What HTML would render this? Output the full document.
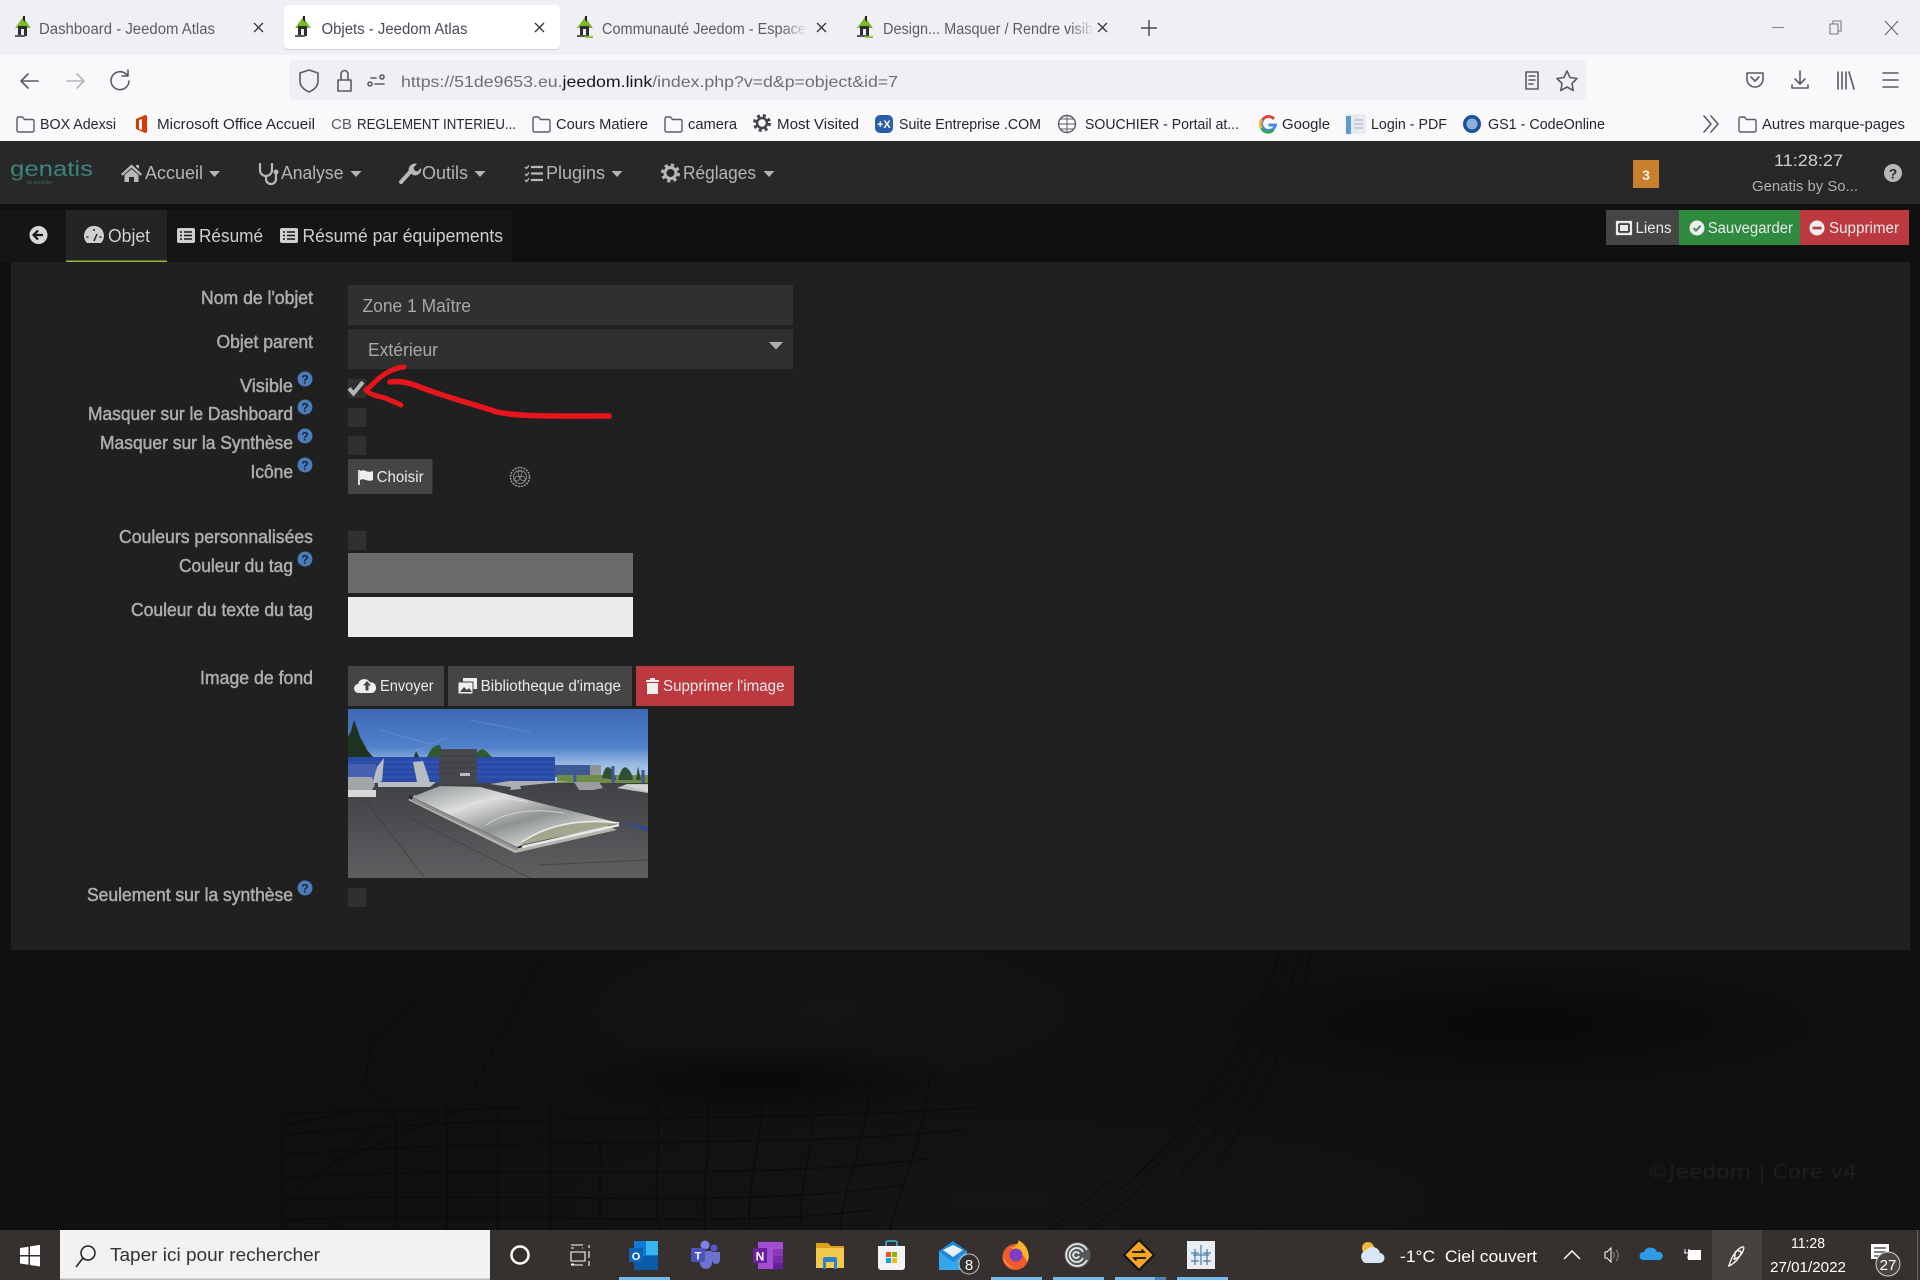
<!DOCTYPE html>
<html lang="fr"><head><meta charset="utf-8"><title>Objets - Jeedom Atlas</title>
<style>
html,body{margin:0;padding:0;width:1920px;height:1280px;overflow:hidden;background:#101010}
svg{display:block}
text{font-family:"Liberation Sans",sans-serif;white-space:pre}
.tab{font-size:15.500px;fill:#5b5b66;transform:translateY(1px)}.tab2{font-size:15.500px;fill:#4a4a55;transform:translateY(1px)}
.bm{font-size:15px;fill:#26262c}
.nav{font-size:18.500px;fill:#b4b4b4}
.tb{font-size:18.500px;fill:#cfcfcf}
.btn{font-size:15.500px;fill:#eaeaea}
.lab{font-size:18.500px;fill:#adadad;stroke:#adadad;stroke-width:.5;transform:translateY(1px)}
.inp{font-size:18.500px;fill:#a8a8a8;transform:translateY(1px)}
.help{font-size:12px;font-weight:bold;fill:#17243a;text-anchor:middle}
.tk{fill:#fff;font-size:17px}
.ico{fill:none;stroke:#5b5b66;stroke-width:1.6;stroke-linecap:round;stroke-linejoin:round}
.wi{fill:none;stroke:#fff;stroke-width:1.5}
</style></head><body>
<svg width="1920" height="1280" viewBox="0 0 1920 1280" xmlns="http://www.w3.org/2000/svg">
<defs>
<linearGradient id="sky" x1="0" y1="0" x2="0" y2="1"><stop offset="0" stop-color="#3d69b4"/><stop offset=".5" stop-color="#5080ca"/><stop offset=".75" stop-color="#9cbde4"/><stop offset="1" stop-color="#b4cdea"/></linearGradient>
<linearGradient id="dome" x1="0" y1="0" x2="1" y2="1"><stop offset="0" stop-color="#8c9092"/><stop offset=".3" stop-color="#dcdedd"/><stop offset=".55" stop-color="#8f9391"/><stop offset=".75" stop-color="#ccd0cc"/><stop offset="1" stop-color="#8c8f89"/></linearGradient>
<linearGradient id="roof" x1="0" y1="0" x2="0" y2="1"><stop offset="0" stop-color="#3f4144"/><stop offset="1" stop-color="#5e5f61"/></linearGradient>
<linearGradient id="logo" x1="0" y1="0" x2="0" y2="1"><stop offset="0" stop-color="#4a9fb5"/><stop offset="1" stop-color="#358a66"/></linearGradient>
<radialGradient id="lt"><stop offset="0" stop-color="#151515"/><stop offset="1" stop-color="#151515" stop-opacity="0"/></radialGradient>
<radialGradient id="dk"><stop offset="0" stop-color="#090909"/><stop offset="1" stop-color="#090909" stop-opacity="0"/></radialGradient>
<linearGradient id="fade1" x1="0" y1="0" x2="1" y2="0"><stop offset="0" stop-color="#f0f0f4" stop-opacity="0"/><stop offset="1" stop-color="#f0f0f4"/></linearGradient>
<g id="fav"><path d="M-1 8L7-3l8 11z" fill="#7db928"/><path d="M7-4l2 0v6l-2-2z" fill="#222"/><rect x="2" y="6" width="9" height="10" fill="#2e2e2e"/><rect x="5" y="9" width="3" height="7" fill="#eee"/><rect x="-1" y="15" width="10" height="2" fill="#5a5a5a"/></g>
<path id="folder" d="M1 3.500a1.500 1.500 0 0 1 1.500-1.500h4l2 2.500h8a1.500 1.500 0 0 1 1.500 1.500v9.500a1.500 1.500 0 0 1-1.500 1.500h-14a1.500 1.500 0 0 1-1.500-1.500z" fill="none" stroke="#5b5b66" stroke-width="1.400"/>
<g id="lst"><rect x="0" y="0" width="18" height="15" rx="2" fill="#cfcfcf"/><path d="M3 4h2M3 7.500h2M3 11h2M7 4h8M7 7.500h8M7 11h8" stroke="#161616" stroke-width="1.600"/></g>
</defs>

<!-- browser chrome -->
<rect width="1920" height="55" fill="#f0f0f4"/>
<rect y="55" width="1920" height="86" fill="#f9f9fb"/>
<rect x="284" y="5" width="276" height="45" rx="4" fill="#d4d4d8"/>
<rect x="284" y="5" width="276" height="44" rx="4" fill="#fff"/>
<use href="#fav" x="16" y="20"/><use href="#fav" x="296" y="20"/><use href="#fav" x="578" y="20"/><use href="#fav" x="858" y="20"/>
<rect x="585" y="36" width="8" height="2" fill="#8cc63f"/><rect x="865" y="36" width="8" height="2" fill="#8cc63f"/>
<text class="tab" x="39" y="33" textLength="176" lengthAdjust="spacingAndGlyphs">Dashboard - Jeedom Atlas</text>
<text class="tab2" x="321.500" y="33" textLength="146" lengthAdjust="spacingAndGlyphs">Objets - Jeedom Atlas</text>
<text class="tab" x="602" y="33" textLength="204" lengthAdjust="spacingAndGlyphs">Communauté Jeedom - Espace</text>
<rect x="782" y="15" width="26" height="26" fill="url(#fade1)"/>
<text class="tab" x="883" y="33" textLength="210" lengthAdjust="spacingAndGlyphs">Design... Masquer / Rendre visib</text>
<rect x="1070" y="15" width="25" height="26" fill="url(#fade1)"/>
<path d="M254 23l9 9m0-9l-9 9M535 23l9 9m0-9l-9 9M817 23l9 9m0-9l-9 9M1098 23l9 9m0-9l-9 9" stroke="#33333a" stroke-width="1.300" fill="none"/>
<path d="M1149 20v16M1141 28h16" stroke="#44444c" stroke-width="1.400" fill="none"/>
<path d="M1772 27.500h12" stroke="#8a8a90" stroke-width="1.200"/>
<path d="M1830 24h8v10h-8zM1833 24v-3h8v10h-3" stroke="#77777d" stroke-width="1.100" fill="none"/>
<path d="M1885 21l13 14m0-14l-13 14" stroke="#66666c" stroke-width="1.100"/>

<path class="ico" d="M21 81h17M21 81l7-7M21 81l7 7"/>
<path class="ico" d="M67 81h17M84 81l-7-7M84 81l-7 7" style="stroke:#b5b5bb"/>
<path class="ico" d="M127 75a9 9 0 1 0 2 6M128 70v6h-6"/>
<rect x="289" y="60" width="1297" height="40" rx="4" fill="#f0f0f4"/>
<path class="ico" d="M309 70l9 3v8q0 7-9 11q-9-4-9-11v-8z"/>
<path class="ico" d="M338 80h13v11h-13zM341 80v-6a3.500 3.500 0 0 1 7 0v6"/>
<path class="ico" d="M371 78h5M384 84h-9"/><circle cx="370" cy="84" r="2" class="ico"/><circle cx="382" cy="77" r="2" class="ico"/>
<text x="401" y="87" font-size="16" textLength="497" lengthAdjust="spacingAndGlyphs" fill="#6d6d78">https://51de9653.eu.<tspan fill="#15141a">jeedom.link</tspan>/index.php?v=d&amp;p=object&amp;id=7</text>
<path class="ico" d="M1526 72h12v17h-12zM1529 76h6M1529 80h6M1529 84h4"/>
<path class="ico" d="M1567 71l3 6.500 7 1-5 5 1.200 7-6.200-3.500-6.200 3.500 1.200-7-5-5 7-1z"/>
<path class="ico" d="M1747 73h16v6a8 8 0 0 1-16 0zM1751 77l4 4 4-4"/>
<path class="ico" d="M1800 71v13M1795 79l5 5 5-5M1792 85v3h16v-3"/>
<path class="ico" d="M1838 72v17M1842 72v17M1846 72v17M1849 72l5 17"/>
<path class="ico" d="M1883 73h15M1883 80h15M1883 87h15"/>

<!-- bookmarks -->
<use href="#folder" x="16" y="115"/><text class="bm" x="40" y="129" textLength="76" lengthAdjust="spacingAndGlyphs">BOX Adexsi</text>
<path d="M136 119l9-4 2 1v16l-2 1-9-4zM139 120v9l3 1v-11z" fill="#d83b01"/><text class="bm" x="157" y="129" textLength="158" lengthAdjust="spacingAndGlyphs">Microsoft Office Accueil</text>
<text x="331" y="129" font-size="15" fill="#5a5a60" textLength="21" lengthAdjust="spacingAndGlyphs">CB</text><text class="bm" x="357" y="129" textLength="159" lengthAdjust="spacingAndGlyphs">REGLEMENT INTERIEU...</text>
<use href="#folder" x="532" y="115"/><text class="bm" x="556" y="129" textLength="92" lengthAdjust="spacingAndGlyphs">Cours Matiere</text>
<use href="#folder" x="664" y="115"/><text class="bm" x="688" y="129" textLength="49" lengthAdjust="spacingAndGlyphs">camera</text>
<circle cx="762" cy="123" r="5" fill="none" stroke="#44444c" stroke-width="2.500"/><circle cx="762" cy="123" r="7.500" fill="none" stroke="#44444c" stroke-width="3" stroke-dasharray="3 3"/><text class="bm" x="777" y="129" textLength="82" lengthAdjust="spacingAndGlyphs">Most Visited</text>
<rect x="875" y="115" width="18" height="18" rx="5" fill="#2a5da8"/><text x="877" y="128" font-size="11" font-weight="bold" fill="#fff">+X</text><text class="bm" x="899" y="129" textLength="142" lengthAdjust="spacingAndGlyphs">Suite Entreprise .COM</text>
<circle cx="1067" cy="124" r="8.500" fill="none" stroke="#5b5b66" stroke-width="1.400"/><path d="M1058.500 124h17M1067 115.500v17M1060 119h14M1060 129h14" stroke="#5b5b66" fill="none"/><text class="bm" x="1085" y="129" textLength="154" lengthAdjust="spacingAndGlyphs">SOUCHIER - Portail at...</text>
<path d="M1274 119a7 7 0 1 0 1.500 6h-7" fill="none" stroke="#4285f4" stroke-width="2.800"/><path d="M1274 119a7 7 0 0 0-11.500 1" fill="none" stroke="#ea4335" stroke-width="2.800"/><path d="M1261.500 120a7 7 0 0 0 0 8" fill="none" stroke="#fbbc05" stroke-width="2.800"/><path d="M1261.500 128a7 7 0 0 0 12 1.500" fill="none" stroke="#34a853" stroke-width="2.800"/><text class="bm" x="1282" y="129" textLength="48" lengthAdjust="spacingAndGlyphs">Google</text>
<rect x="1346" y="114" width="20" height="20" fill="#e6ebf2"/><rect x="1346" y="116" width="5" height="18" fill="#5b9bd5"/><path d="M1354 120h9M1354 124h9M1354 128h9" stroke="#aab"/><text class="bm" x="1371" y="129" textLength="76" lengthAdjust="spacingAndGlyphs">Login - PDF</text>
<circle cx="1472" cy="124" r="9" fill="#1f4e9c"/><circle cx="1472" cy="124" r="5.500" fill="#8fb0d6"/><text class="bm" x="1488" y="129" textLength="117" lengthAdjust="spacingAndGlyphs">GS1 - CodeOnline</text>
<path class="ico" d="M1704 116l7 8-7 8M1711 116l7 8-7 8"/>
<use href="#folder" x="1738" y="115"/><text class="bm" x="1762" y="129" textLength="143" lengthAdjust="spacingAndGlyphs">Autres marque-pages</text>

<!-- page background -->
<rect y="141" width="1920" height="1089" fill="#101010"/>
<ellipse cx="830" cy="1010" rx="330" ry="100" fill="url(#lt)"/>
<ellipse cx="1000" cy="1200" rx="600" ry="110" fill="url(#lt)"/>
<ellipse cx="760" cy="1080" rx="200" ry="40" fill="url(#dk)"/>
<ellipse cx="1520" cy="1025" rx="320" ry="65" fill="url(#dk)"/>
<g fill="none" stroke="#0a0a0a" stroke-width="1.500" opacity=".75">
<path d="M282 1113l240-5M282 1135c250-25 470-10 700-28M282 1155c250-20 480-5 680-25M282 1178c240-15 470 5 650-20M282 1200c240-10 460 10 620-15M282 1220c240-10 430 10 590-10"/>
<path d="M282 1113v117M336 1108v122M395 1108v122M447 1105v125M498 1105v125M550 1105v125M600 1100v130M655 1095c10 50-5 90 5 135M705 1092c10 50-5 90 0 138M760 1092c5 50-15 90-10 138M815 1090c0 50-15 90-15 140M870 1075c0 60-25 100-30 155M930 1075c-5 60-30 110-40 155"/>
<path d="M282 1125l70-12M300 1190l100-82M340 1160l120-50"/>
</g>
<g fill="none" stroke="#0c0c0c" stroke-width="1.500" opacity=".7">
<path d="M370 1045l-5 45 90 40M420 1000l-55 45M540 960l-70 135"/>
<path d="M1312 950c-20 90-60 170-100 220M1300 950c-20 90-70 170-120 225M1290 950c-30 100-90 180-145 225M1280 950c-30 100-100 190-160 240M1110 1180l-60 50M1150 1180l-60 50"/>
</g>
<text x="1647" y="1178" font-size="19" fill="#1e1e1e" textLength="210" lengthAdjust="spacingAndGlyphs" style="font-family:'DejaVu Sans',sans-serif">©Jeedom | Core v4</text>

<!-- top navbar -->
<rect y="141" width="1920" height="63" fill="#272928"/>
<text x="10" y="176" font-size="21" fill="url(#logo)" fill-opacity=".85" textLength="83" lengthAdjust="spacingAndGlyphs">genatis</text>
<text x="27" y="184" font-size="5" fill="#3a6a60">by souchier</text>
<!-- home -->
<path d="M121 174l10.500-9.500 10.500 9.500-1.500 1.800-9-8-9 8z" fill="#b8b8b8"/><path d="M124.500 175l7-6 7 6v7h-4.500v-5h-5v5h-4.500zM136 165h3v4l-3-2.500z" fill="#b8b8b8"/>
<text class="nav" x="145" y="179" textLength="58" lengthAdjust="spacingAndGlyphs">Accueil</text><path d="M209 171h11l-5.500 6z" fill="#b4b4b4"/>
<!-- stethoscope -->
<path d="M260 163v7a6 6 0 0 0 12 0v-7M266 176v3a5 5 0 0 0 10 0v-5" fill="none" stroke="#b8b8b8" stroke-width="2.200"/><circle cx="276" cy="172" r="2.500" fill="#b8b8b8"/>
<text class="nav" x="281" y="179" textLength="62.500" lengthAdjust="spacingAndGlyphs">Analyse</text><path d="M350.500 171h11l-5.500 6z" fill="#b4b4b4"/>
<!-- wrench -->
<path d="M401 182l10-11" stroke="#b8b8b8" stroke-width="4" stroke-linecap="round"/><path d="M409 172a6 6 0 0 1 2-7 6 6 0 0 1 6-1l-3.500 3.500 1 3 3 1 3.500-3.500a6 6 0 0 1-8 7z" fill="#b8b8b8"/>
<text class="nav" x="422" y="179" textLength="46" lengthAdjust="spacingAndGlyphs">Outils</text><path d="M474.500 171h11l-5.500 6z" fill="#b4b4b4"/>
<!-- list-check -->
<path d="M525 167l1.500 1.500 2.500-3M525 174l1.500 1.500 2.500-3M525 180l1.500 1.500 2.500-3" stroke="#b8b8b8" stroke-width="1.400" fill="none"/><path d="M531 167h12M531 173.500h12M531 180h12" stroke="#b8b8b8" stroke-width="2.200"/>
<text class="nav" x="546" y="179" textLength="59" lengthAdjust="spacingAndGlyphs">Plugins</text><path d="M611.500 171h11l-5.500 6z" fill="#b4b4b4"/>
<!-- gear -->
<circle cx="670.500" cy="173" r="5.500" fill="none" stroke="#b8b8b8" stroke-width="3"/><circle cx="670.500" cy="173" r="8" fill="none" stroke="#b8b8b8" stroke-width="3" stroke-dasharray="3.200 3.100"/>
<text class="nav" x="683" y="179" textLength="73" lengthAdjust="spacingAndGlyphs">Réglages</text><path d="M763.500 171h11l-5.500 6z" fill="#b4b4b4"/>

<rect x="1633" y="160" width="26" height="28" fill="#c9802d"/><text x="1646" y="180" font-size="14" font-weight="bold" fill="#eee" text-anchor="middle">3</text>
<text x="1774" y="166" font-size="17" fill="#cfcfcf" textLength="69" lengthAdjust="spacingAndGlyphs">11:28:27</text>
<text x="1752" y="191" font-size="15" fill="#b0b0b0" textLength="106" lengthAdjust="spacingAndGlyphs">Genatis by So...</text>
<circle cx="1893" cy="173" r="9" fill="#b8b8b8"/><text x="1893" y="178.500" font-size="14" font-weight="bold" fill="#272928" text-anchor="middle">?</text>

<!-- tabs row -->
<rect x="0" y="210" width="512" height="52" fill="#151515"/>
<circle cx="38.500" cy="235" r="9" fill="#d8d8d8"/><path d="M43 235h-8M38 230.500l-4.500 4.500 4.500 4.500" fill="none" stroke="#171717" stroke-width="2.200"/>
<rect x="66" y="210" width="101" height="52" fill="#242424"/><rect x="66" y="260.500" width="101" height="1.500" fill="#94b83a"/>
<path d="M87 243a10 10 0 1 1 14 0z" fill="#cfcfcf"/><path d="M86.500 237h2M101.500 237h-2M94 229v2M94 241l3-7" stroke="#242424" stroke-width="1.500"/>
<text class="tb" x="108" y="242" textLength="42" lengthAdjust="spacingAndGlyphs">Objet</text>
<use href="#lst" x="177" y="228"/><text class="tb" x="199" y="242" textLength="64" lengthAdjust="spacingAndGlyphs">Résumé</text>
<use href="#lst" x="280" y="228"/><text class="tb" x="302.500" y="242" textLength="200.500" lengthAdjust="spacingAndGlyphs">Résumé par équipements</text>

<rect x="1606" y="210" width="73" height="35" fill="#454545"/>
<rect x="1679" y="210" width="121" height="35" fill="#2f8a40"/>
<rect x="1800" y="210" width="109" height="35" fill="#bd3940"/>
<path d="M1617 222h14v12h-14z" fill="none" stroke="#e8e8e8" stroke-width="2.200"/><rect x="1620" y="225" width="8" height="6" fill="#e8e8e8"/><path d="M1616 221h3v3h-3zM1629 221h3v3h-3zM1616 232h3v3h-3zM1629 232h3v3h-3z" fill="#e8e8e8"/>
<text class="btn" x="1635.500" y="233" textLength="36" lengthAdjust="spacingAndGlyphs">Liens</text>
<circle cx="1697" cy="228" r="7.500" fill="#eee"/><path d="M1693.500 228l2.500 2.700 4.500-5" fill="none" stroke="#2f8a40" stroke-width="1.800"/>
<text class="btn" x="1707.700" y="233" textLength="85.300" lengthAdjust="spacingAndGlyphs">Sauvegarder</text>
<circle cx="1817" cy="228" r="7.500" fill="#eee"/><rect x="1812.500" y="226.700" width="9" height="2.700" fill="#bd3940"/>
<text class="btn" x="1829" y="233" textLength="70" lengthAdjust="spacingAndGlyphs">Supprimer</text>

<!-- panel -->
<rect x="11" y="262" width="1899" height="688" fill="#202020"/>

<text class="lab" x="201" y="303" textLength="112" lengthAdjust="spacingAndGlyphs">Nom de l'objet</text>
<rect x="348" y="285" width="445" height="40" fill="#303030"/><text class="inp" x="362.500" y="311" textLength="108.500" lengthAdjust="spacingAndGlyphs">Zone 1 Maître</text>
<text class="lab" x="216.500" y="347" textLength="96.500" lengthAdjust="spacingAndGlyphs">Objet parent</text>
<rect x="348" y="329" width="445" height="40" fill="#303030"/><text class="inp" x="368" y="355" textLength="70" lengthAdjust="spacingAndGlyphs">Extérieur</text><path d="M769 342h14l-7 7.500z" fill="#b0b0b0"/>

<text class="lab" x="240" y="391" textLength="53" lengthAdjust="spacingAndGlyphs">Visible</text>
<circle cx="305" cy="379" r="7.500" fill="#4a7cba"/><text class="help" x="305" y="383.500">?</text>
<rect x="348" y="379" width="18" height="19" fill="#303030"/><path d="M349 388.500l4.500 5 9.500-11.500" fill="none" stroke="#b5b5b5" stroke-width="4"/>

<text class="lab" x="88" y="419" textLength="205" lengthAdjust="spacingAndGlyphs">Masquer sur le Dashboard</text>
<circle cx="305" cy="407" r="7.500" fill="#4a7cba"/><text class="help" x="305" y="411.500">?</text>
<rect x="348" y="408" width="18" height="19" fill="#303030"/>

<text class="lab" x="100" y="448" textLength="193" lengthAdjust="spacingAndGlyphs">Masquer sur la Synthèse</text>
<circle cx="305" cy="436" r="7.500" fill="#4a7cba"/><text class="help" x="305" y="440.500">?</text>
<rect x="348" y="436" width="18" height="19" fill="#303030"/>

<text class="lab" x="250.500" y="477" textLength="42.500" lengthAdjust="spacingAndGlyphs">Icône</text>
<circle cx="305" cy="465" r="7.500" fill="#4a7cba"/><text class="help" x="305" y="469.500">?</text>
<rect x="348" y="459" width="84.500" height="35" fill="#454545"/>
<path d="M359 470v15" stroke="#eee" stroke-width="1.800"/><path d="M360 471q3-1.500 6 0t7 0v9q-3 1.500-7 0t-6 0z" fill="#eee"/>
<text class="btn" x="376.600" y="482" textLength="47" lengthAdjust="spacingAndGlyphs">Choisir</text>
<circle cx="520" cy="477" r="9.500" fill="none" stroke="#9a9a9a" stroke-width="1.500" stroke-dasharray="2 1"/><circle cx="520" cy="477" r="6.500" fill="none" stroke="#8a8a8a"/><path d="M520 477q-4-5 0-6q4 1 0 6q6-2 5 3q-4 2-5-3q-1 6-5 3q-1-5 5-3" fill="none" stroke="#8a8a8a" stroke-width=".8"/>

<text class="lab" x="119" y="542" textLength="194" lengthAdjust="spacingAndGlyphs">Couleurs personnalisées</text>
<rect x="348" y="531" width="18" height="19" fill="#303030"/>
<text class="lab" x="179" y="571" textLength="114" lengthAdjust="spacingAndGlyphs">Couleur du tag</text>
<circle cx="305" cy="559" r="7.500" fill="#4a7cba"/><text class="help" x="305" y="563.500">?</text>
<rect x="348" y="553" width="285" height="40" fill="#6b6b6b"/>
<text class="lab" x="131" y="615" textLength="182" lengthAdjust="spacingAndGlyphs">Couleur du texte du tag</text>
<rect x="348" y="597" width="285" height="40" fill="#ebebeb"/>

<text class="lab" x="200" y="683" textLength="113" lengthAdjust="spacingAndGlyphs">Image de fond</text>
<rect x="348" y="666" width="96" height="40" fill="#454545"/>
<path d="M359 693a4.500 4.500 0 0 1-1-9a6.500 6.500 0 0 1 12-1.500a5 5 0 0 1 6 5a5 5 0 0 1-4 5.500z" fill="#eee"/><path d="M367 681l4 4.500h-2.500v5h-3v-5h-2.500z" fill="#454545"/>
<text class="btn" x="380" y="691" textLength="53.600" lengthAdjust="spacingAndGlyphs">Envoyer</text>
<rect x="448" y="666" width="184" height="40" fill="#454545"/>
<rect x="463" y="678" width="14" height="11" fill="#eee"/><rect x="458" y="682" width="15" height="12" fill="#eee" stroke="#454545"/><path d="M460 692l4-5 3 3 2-2 3 4z" fill="#454545"/>
<text class="btn" x="480.600" y="691" textLength="140.400" lengthAdjust="spacingAndGlyphs">Bibliotheque d'image</text>
<rect x="636" y="666" width="158" height="40" fill="#bd3940"/>
<path d="M646 680h13v2h-13zM650 678h5v2h-5zM647 683h11v11h-11z" fill="#eee"/>
<text class="btn" x="663" y="691" textLength="121.500" lengthAdjust="spacingAndGlyphs">Supprimer l'image</text>

<!-- image -->
<g>
<rect x="348" y="709" width="300" height="75" fill="url(#sky)"/>
<path d="M380 730l50 14M412 752l35-14M470 720l60 12" stroke="#8aaedb" stroke-width="1.500" opacity=".25" fill="none"/>
<path d="M348 757v-20l3-6 3-11 3 8 3 9 4 7 3 6 6 7z" fill="#1f3320"/>
<path d="M427 757q5-12 13-12l4 12zM476 755q4-9 10-4l11 11-21 1zM531 765l6-3 6 3z" fill="#2f5a2a"/>
<path d="M414 757l2-6 3 6z" fill="#23381f"/>
<rect x="348" y="757" width="207" height="26" fill="#2a4aa8"/>
<path d="M348 762h207M348 767h207M348 772h207M348 777h207" stroke="#4464c0" stroke-width="1" opacity=".6"/>
<rect x="348" y="764" width="28" height="14" fill="#5b78b4" opacity=".5"/>
<path d="M372 785l5-18 7-9-2 23zM413 762l10-1 6 18 1 4-13-1z" fill="#b6bcc4"/>
<rect x="555" y="765" width="45" height="12" fill="#3e5a94"/><rect x="590" y="765" width="11" height="12" fill="#8f9496"/>
<rect x="557" y="775" width="91" height="8" fill="#6e8b4a"/>
<path d="M602 778q3-14 8-10t6 12zM618 780q4-16 9-12t6 12zM636 780l2-14 3 14z" fill="#2e4f33"/>
<path d="M575 770v12M613 766v17M643 770v13" stroke="#3c5896" stroke-width="3"/>
<rect x="348" y="783" width="300" height="95" fill="url(#roof)"/>
<path d="M348 797l0-20h24l3 8-3 5-6 1v5h-18z" fill="#a2a5a8"/><rect x="348" y="790" width="28" height="7" fill="#d8d8d8"/>
<path d="M378 782h58l-6 5h-52z" fill="#b9bcbc"/>
<rect x="439" y="749" width="38" height="35" fill="#47484e"/><path d="M439 756h38M439 762h38M439 768h38M439 774h38" stroke="#3a3b40"/>
<rect x="460" y="773" width="10" height="3" fill="#bbb"/>
<path d="M490 784l20-3h60l-60 6zM510 790l3-8h6l2 7z" fill="#adb0b0"/>
<path d="M574 782h25l4 6-10 2h-14z" fill="#9a9c9f"/><path d="M617 788l10-4h21v9z" fill="#bfc2c3"/>
<path d="M625 785l23 0v7z" fill="#d3d5d6"/>
<path d="M620 822l28 5v5z" fill="#2f4c88"/>
<path d="M425 878L365 800M530 878l-120-60M648 860l-110 5" stroke="#38393b" stroke-width="1" fill="none" opacity=".6"/>
<path d="M408 800l107 53 102-23-12-5-90 22-100-52z" fill="#b6b3ad"/>
<path d="M410 799l105 50 90-21-88 17-108-50z" fill="#24262b"/>
<path d="M412 797l28-11 40 1 60 16 79 20-97 22-5 2z" fill="url(#dome)"/>
<path d="M522 842q38-26 97-19l-97 22z" fill="#a4a68e"/>
<path d="M522 842q38-26 97-19" fill="none" stroke="#eeeeee" stroke-width="1.500"/>
<path d="M522 847l97-22" stroke="#e8e8e8" stroke-width="2.500"/>
<path d="M456 812q30-20 72-10M486 825q30-20 78-12" fill="none" stroke="#e8e8e8" stroke-width="1" opacity=".7"/>
<path d="M412 799l105 50" stroke="#8e9090" stroke-width="3"/>
</g>

<text class="lab" x="87" y="900" textLength="206" lengthAdjust="spacingAndGlyphs">Seulement sur la synthèse</text>
<circle cx="305" cy="888" r="7.500" fill="#4a7cba"/><text class="help" x="305" y="892.500">?</text>
<rect x="348" y="888" width="18" height="19" fill="#303030"/>

<!-- red arrow -->
<path d="M609 416C560 416 520 417 497 412C470 403 445 397 420 387C405 381 396 381 390 382" fill="none" stroke="#e8161c" stroke-width="5.500" stroke-linecap="round" stroke-linejoin="round"/>
<path d="M404 367C392 368 380 376 372 385L366 390C370 395 378 396 385 398C392 401 397 403 401 405" fill="none" stroke="#e8161c" stroke-width="5" stroke-linecap="round" stroke-linejoin="round"/>

<!-- taskbar -->
<rect y="1230" width="1920" height="50" fill="#36302e"/>
<path d="M20 1248l8.500-1.300v8.300h-8.500zM30 1246.400l10-1.500v10.100h-10zM20 1256.500h8.500v8.300l-8.500-1.300zM30 1256.500h10v10l-10-1.500z" fill="#fff"/>
<rect x="60" y="1230" width="430" height="50" fill="#f2f2f2"/><rect x="60" y="1278.500" width="430" height="1.500" fill="#b8b8b8"/>
<circle cx="88" cy="1253" r="7" fill="none" stroke="#222" stroke-width="1.500"/><path d="M83 1258l-7 9" stroke="#222" stroke-width="1.500"/>
<text x="110" y="1261" font-size="18.500" fill="#333" textLength="210" lengthAdjust="spacingAndGlyphs">Taper ici pour rechercher</text>
<circle cx="520" cy="1255" r="8.500" fill="none" stroke="#fff" stroke-width="2.500"/>
<path d="M571 1245h12M571 1248h3M583 1248h-1M571 1252h14v9h-14zM571 1265h12M571 1264h3M589 1245v3M589 1251v7M589 1261v5" fill="none" stroke="#fff" stroke-width="1.100"/>

<!-- outlook -->
<rect x="634" y="1241" width="24" height="28" fill="#0f78d4"/><rect x="646" y="1241" width="12" height="14" fill="#36b6ec"/><path d="M634 1256l24 0v14h-24z" fill="#0a5aa8"/><rect x="629" y="1248" width="14" height="14" rx="1" fill="#0c64b8"/><text x="636" y="1260" font-size="11" font-weight="bold" fill="#fff" text-anchor="middle">O</text>
<rect x="619" y="1277" width="51" height="3" fill="#76b9ed"/>
<!-- teams -->
<circle cx="705" cy="1245" r="4.500" fill="#7b83eb"/><circle cx="714" cy="1248" r="3.500" fill="#5059c9"/><path d="M700 1251h12v12a6 6 0 0 1-12 0zM712 1252h8v8a4 4 0 0 1-8 0z" fill="#6b72cf"/><rect x="691" y="1248" width="14" height="14" rx="1.500" fill="#4b53bc"/><text x="698" y="1259.500" font-size="11" font-weight="bold" fill="#fff" text-anchor="middle">T</text>
<!-- onenote -->
<rect x="758" y="1242" width="25" height="27" fill="#a34dd4"/><rect x="773" y="1249" width="10" height="7" fill="#8a37b8"/><rect x="773" y="1256" width="10" height="7" fill="#7a2ca8"/><rect x="773" y="1263" width="10" height="6" fill="#63209a"/><rect x="753" y="1248" width="14" height="15" fill="#6a1f9c"/><text x="760" y="1260.500" font-size="12" font-weight="bold" fill="#fff" text-anchor="middle">N</text>
<!-- files -->
<path d="M816 1243h12l3 3h13v22h-28z" fill="#dca21d"/><path d="M816 1248h28v20h-28z" fill="#f2c94c"/><path d="M823 1269v-10a2 2 0 0 1 2-2h10a2 2 0 0 1 2 2v10h-3v-7h-8v7z" fill="#2a83c9"/>
<!-- store -->
<path d="M878 1246h27v21a3 3 0 0 1-3 3h-21a3 3 0 0 1-3-3z" fill="#f4f4f4"/><path d="M886 1246v-3a2 2 0 0 1 2-2h7a2 2 0 0 1 2 2v3" fill="none" stroke="#3aa3cc" stroke-width="1.800"/><rect x="886" y="1252" width="5" height="5" fill="#f25022"/><rect x="892" y="1252" width="5" height="5" fill="#7fba00"/><rect x="886" y="1258" width="5" height="5" fill="#00a4ef"/><rect x="892" y="1258" width="5" height="5" fill="#ffb900"/>
<!-- mail -->
<path d="M939 1251l14-10 14 10v17h-28z" fill="#1e88d8"/><path d="M943 1250l10-5 10 5-10 7z" fill="#e8edf4"/><path d="M939 1251l14 11 14-11v19h-28z" fill="#34a7e8"/>
<circle cx="969" cy="1264" r="10" fill="#36302e" stroke="#c8c8c8"/><text x="969" y="1270" font-size="15" fill="#fff" text-anchor="middle">8</text>
<!-- firefox -->
<circle cx="1015.500" cy="1257" r="13" fill="#ef5b2d"/><path d="M1008 1245q3 3 6 2q6-5 4-7q8 4 10 12q2 6-1 10q-3-8-9-9z" fill="#ffb52a"/><circle cx="1016" cy="1255" r="6.500" fill="#7d3ec4"/><path d="M1003 1256q3 10 13 12q-12-1-13-12" fill="#ffb52a"/>
<rect x="991" y="1277" width="51" height="3" fill="#76b9ed"/>
<!-- spiral -->
<circle cx="1077.500" cy="1255" r="13" fill="#55585a"/><path d="M1087 1250a11 11 0 1 0 0 10M1083 1252a7 7 0 1 0 0 6M1079 1254a3 3 0 1 0 0 2" fill="none" stroke="#e8e8e8" stroke-width="1.800"/>
<rect x="1053" y="1277" width="51" height="3" fill="#76b9ed"/>
<!-- transfer -->
<path d="M1139 1240l15 15-15 15-15-15z" fill="#f5a623" stroke="#141414" stroke-width="2"/><path d="M1132 1252h12l-2.500-2.500M1146 1258h-12l2.500 2.500" fill="none" stroke="#141414" stroke-width="1.700"/>
<rect x="1115" y="1277" width="51" height="3" fill="#76b9ed"/><rect x="1155" y="1277" width="11" height="3" fill="#4a84b8"/>
<!-- tableau -->
<rect x="1187" y="1241" width="28" height="28" fill="#e8eef4"/><path d="M1201 1245v20M1193 1255h16M1195 1249v8M1191 1253h8M1207 1249v8M1203 1253h8M1195 1257v8M1191 1261h8M1207 1257v8M1203 1261h8" stroke="#4a7ca8" stroke-width="1.200"/>
<rect x="1177" y="1277" width="51" height="3" fill="#76b9ed"/>

<!-- tray -->
<circle cx="1368" cy="1248" r="6" fill="#f1b93a"/><path d="M1365 1263a7 7 0 0 1 1-13a8 8 0 0 1 14 3a5 5 0 0 1-1 10z" fill="#d8e6f6"/>
<text class="tk" x="1400" y="1262" textLength="137" lengthAdjust="spacingAndGlyphs">-1°C  Ciel couvert</text>
<path class="wi" d="M1564 1259l8-8 8 8"/>
<path d="M1605 1252h2l4-4v14l-4-4h-2z" fill="none" stroke="#fff" stroke-width="1"/><path d="M1613 1252a4 4 0 0 1 0 6M1616 1250a8 8 0 0 1 0 11" fill="none" stroke="#8a8a8a" stroke-width="1"/>
<path d="M1643 1260a4 4 0 0 1 1-8a6 6 0 0 1 8-4a5 5 0 0 1 5 4a4 4 0 0 1 3 8z" fill="#2e9be6"/>
<rect x="1688" y="1250" width="13" height="10" fill="#fff"/><path d="M1685 1249v4M1689 1249v4M1684 1253h6v3h-2v3" fill="none" stroke="#fff"/>
<rect x="1712" y="1230" width="50" height="50" fill="#47423f"/>
<path d="M1729 1266q2-8 6-13t7-6 1 4-6 7-3 1 1-5 5-3q3 1-3 9q-6 6-9 6z" fill="none" stroke="#fff" stroke-width="1.300"/>
<text class="tk" x="1791" y="1248" textLength="34" lengthAdjust="spacingAndGlyphs" style="font-size:15px">11:28</text>
<text class="tk" x="1770" y="1272" textLength="76" lengthAdjust="spacingAndGlyphs" style="font-size:15px">27/01/2022</text>
<path d="M1871 1244h18v15h-18z" fill="#fff"/><path d="M1874 1248h12M1874 1252h12M1874 1256h12" stroke="#36302e" stroke-width="1.200"/>
<circle cx="1888" cy="1264" r="12" fill="#4a4644" stroke="#d0d0d0"/><text x="1888" y="1270" font-size="15" fill="#fff" text-anchor="middle">27</text>
<rect x="1917" y="1230" width="1" height="50" fill="#6a6563"/>
</svg>
</body></html>
